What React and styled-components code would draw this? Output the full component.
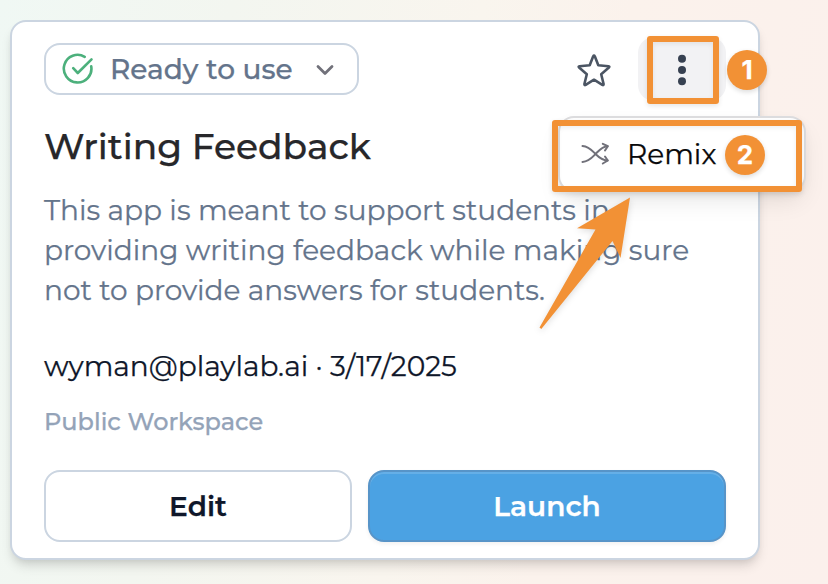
import React from 'react';
import styled, { createGlobalStyle } from 'styled-components';

const ORANGE = '#f29135';

const GlobalStyle = createGlobalStyle`
  *, *::before, *::after { box-sizing: border-box; }
  body {
    margin: 0;
    font-family: Montserrat, Inter, sans-serif;
    -webkit-font-smoothing: antialiased;
    -webkit-text-stroke: 0.25px;
  }
`;

const Page = styled.main`
  position: relative;
  width: 828px;
  height: 584px;
  padding: 20px 0 0 10px;
  overflow: hidden;
  background: linear-gradient(100deg, #f0f8f4 0%, #f3f6f0 25%, #f9f5ee 52%, #fbf2ec 68%, #fbf0ec 100%);
`;

const Card = styled.article`
  display: flex;
  flex-direction: column;
  width: 750px;
  height: 540px;
  padding: 15px 32px 16px;
  background: #fff;
  border: 2px solid #cbd5e1;
  border-radius: 16px;
  box-shadow: 0 8px 12px -2px rgba(0, 0, 0, 0.12), 0 4px 8px -4px rgba(0, 0, 0, 0.12);
`;

const TopBar = styled.header`
  display: flex;
  align-items: center;
  height: 64px;
`;

const StatusSelect = styled.button`
  display: flex;
  align-items: center;
  width: 315px;
  height: 52px;
  padding: 0 19px 0 15px;
  background: #fff;
  border: 2px solid #cbd5e1;
  border-radius: 16px;
  color: #64748b;
  font: 500 28px/40px Montserrat, Inter, sans-serif;
`;

const StatusLabel = styled.span`
  margin-left: 15px;
  margin-right: auto;
`;

const StarButton = styled.button`
  display: flex;
  margin-left: auto;
  padding: 3px 0 0;
  border: 0;
  background: none;
  color: #4b5563;
`;

const MoreButton = styled.button`
  display: flex;
  align-items: center;
  justify-content: center;
  width: 88px;
  height: 64px;
  margin-left: 26px;
  padding: 2px 0 0;
  border: 0;
  border-radius: 16px;
  background: #f2f2f4;
  color: #374151;
`;

const Title = styled.h2`
  margin: 23px 0 0;
  color: #27272a;
  font-size: 36px;
  font-weight: 500;
  line-height: 44px;
`;

const Description = styled.p`
  margin: 22px 0 0;
  color: #64748b;
  font-size: 28px;
  line-height: 40px;
  white-space: nowrap;
`;

const Byline = styled.p`
  margin: 36px 0 0;
  color: #0f172a;
  font-size: 28px;
  line-height: 40px;
`;

const Workspace = styled.p`
  margin: 20px 0 0;
  color: #94a3b8;
  font-size: 24px;
  font-weight: 500;
  line-height: 32px;
`;

const Actions = styled.footer`
  display: flex;
  gap: 16px;
  margin-top: auto;
`;

const ActionButton = styled.button`
  width: ${({ $primary }) => ($primary ? 358 : 308)}px;
  height: 72px;
  padding: 0;
  border: 2px solid ${({ $primary }) => ($primary ? '#5794c8' : '#cbd5e1')};
  border-radius: 16px;
  background: ${({ $primary }) => ($primary ? '#4ba2e3' : '#fff')};
  box-shadow: ${({ $primary }) =>
    $primary ? 'inset 0 2px 0 rgba(255, 255, 255, 0.15), 0 2px 4px rgba(0, 0, 0, 0.06)' : 'none'};
  color: ${({ $primary }) => ($primary ? '#fff' : '#0f172a')};
  font: 600 28px/40px Montserrat, Inter, sans-serif;
`;

const Menu = styled.div`
  position: absolute;
  left: 558px;
  top: 116px;
  display: flex;
  align-items: center;
  width: 248px;
  height: 76px;
  padding-left: 20px;
  background: #fff;
  border: 2px solid #dcdcde;
  border-radius: 16px;
  box-shadow: 0 12px 24px -4px rgba(0, 0, 0, 0.1), 0 4px 10px rgba(0, 0, 0, 0.04);
`;

const MenuLabel = styled.span`
  margin-left: 17px;
  color: #09090b;
  font-size: 28px;
  line-height: 40px;
`;

const Highlight = styled.div`
  position: absolute;
  left: ${({ $x }) => $x}px;
  top: ${({ $y }) => $y}px;
  width: ${({ $w }) => $w}px;
  height: ${({ $h }) => $h}px;
  border: 6px solid ${ORANGE};
  border-radius: 3px;
  box-shadow: 0 2px 5px rgba(0, 0, 0, 0.1), inset 0 2px 5px rgba(0, 0, 0, 0.07);
`;

const StepBadge = styled.div`
  position: absolute;
  left: ${({ $x }) => $x}px;
  top: ${({ $y }) => $y}px;
  display: flex;
  align-items: center;
  justify-content: center;
  width: 40px;
  height: 40px;
  padding-bottom: 1px;
  border-radius: 50%;
  background: ${ORANGE};
  box-shadow: 0 2px 5px rgba(0, 0, 0, 0.14);
  color: #fff;
  font: 700 26px/39px Inter, sans-serif;
`;

const Pointer = styled.svg`
  position: absolute;
  left: 530px;
  top: 190px;
  filter: drop-shadow(0 2px 3px rgba(0, 0, 0, 0.14));
`;

const CheckIcon = () => (
  <svg width="34" height="34" viewBox="0 0 34 34" fill="none" stroke="#4cb07c" strokeWidth="2.6" strokeLinecap="round" strokeLinejoin="round">
    <path d="M23.7 4.8A13.8 13.8 0 1 0 30.2 14.2" />
    <path d="M12.2 16.2l4.6 4.8L30.5 7.3" />
  </svg>
);

const ChevronIcon = () => (
  <svg width="26" height="24" viewBox="0 0 26 24" fill="none" stroke="#71717a" strokeWidth="2.8" strokeLinecap="round" strokeLinejoin="round">
    <path d="M6 9.5l7 7 7-7" />
  </svg>
);

const StarIcon = () => (
  <svg width="36" height="36" viewBox="0 0 36 36" fill="none" stroke="currentColor" strokeWidth="2.6" strokeLinejoin="round">
    <path d="M17.2 3.3Q18 1.8 18.8 3.3L22.3 12.3L32.5 13.2Q34 13.5 32.9 14.6L25.2 21.2L27.6 31Q27.7 32.6 26.3 31.9L18 26.7L9.7 31.9Q8.3 32.6 8.4 31L10.8 21.2L3.1 14.6Q2 13.5 3.5 13.2L13.7 12.3Z" />
  </svg>
);

const DotsIcon = () => (
  <svg width="12" height="34" viewBox="0 0 12 34" fill="currentColor">
    <circle cx="6" cy="5.8" r="4" />
    <circle cx="6" cy="17" r="4" />
    <circle cx="6" cy="28.2" r="4" />
  </svg>
);

const ShuffleIcon = () => (
  <svg width="30" height="24" viewBox="0 0 30 24" fill="none" stroke="#71717a" strokeWidth="2" strokeLinecap="round" strokeLinejoin="round">
    <path d="M2.5 4C9 4.5 12 8.500 15.5 12S22 18.2 27.5 18.5" />
    <path d="M2.5 20C9 19.5 12 15.5 15.5 12S22 4.5 27.5 4.2" />
    <path d="M22.8 1.8L27.8 4.2L25 8.5" />
    <path d="M25 14.5L27.8 18.5L22.8 21.5" />
  </svg>
);

export default function App() {
  return (
    <Page>
      <GlobalStyle />
      <Card>
        <TopBar>
          <StatusSelect>
            <CheckIcon />
            <StatusLabel>Ready to use</StatusLabel>
            <ChevronIcon />
          </StatusSelect>
          <StarButton aria-label="Favorite"><StarIcon /></StarButton>
          <MoreButton aria-label="More options"><DotsIcon /></MoreButton>
        </TopBar>
        <Title>Writing Feedback</Title>
        <Description>
          This app is meant to support students in<br />
          providing writing feedback while making sure<br />
          not to provide answers for students.
        </Description>
        <Byline>wyman@playlab.ai · 3/17/2025</Byline>
        <Workspace>Public Workspace</Workspace>
        <Actions>
          <ActionButton>Edit</ActionButton>
          <ActionButton $primary>Launch</ActionButton>
        </Actions>
      </Card>
      <Menu>
        <ShuffleIcon />
        <MenuLabel>Remix</MenuLabel>
      </Menu>
      <Highlight $x={647} $y={36} $w={72} $h={68} />
      <Highlight $x={552} $y={120} $w={250} $h={72} />
      <StepBadge $x={727} $y={50}>1</StepBadge>
      <StepBadge $x={725} $y={135}>2</StepBadge>
      <Pointer width="110" height="150" viewBox="530 190 110 150">
        <path d="M630 197.5L577 228.3L595.5 229.5L539.5 327.5L541.3 329L612.5 241L620.5 258Z" fill={ORANGE} />
      </Pointer>
    </Page>
  );
}
